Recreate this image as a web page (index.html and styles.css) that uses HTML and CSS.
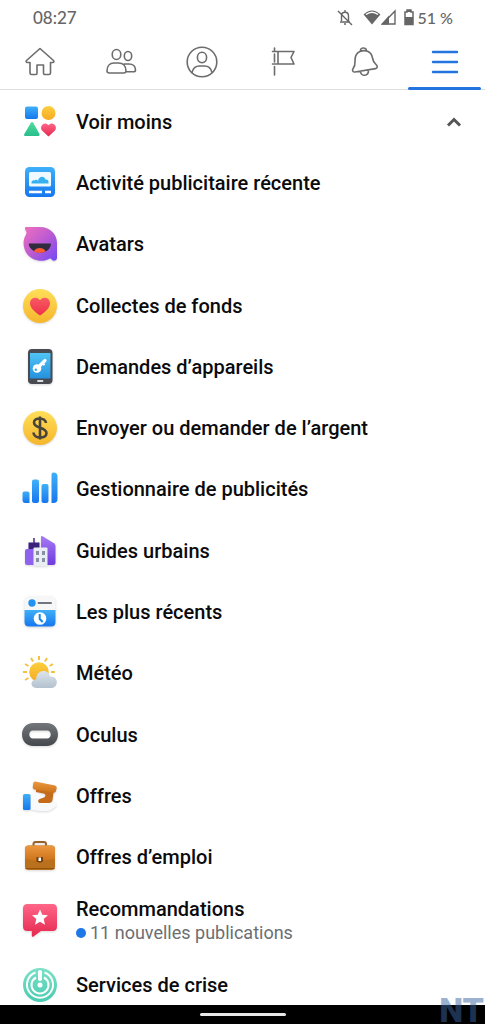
FILE: index.html
```html
<!DOCTYPE html>
<html lang="fr">
<head>
    <meta charset="UTF-8">
    <meta name="viewport" content="width=device-width, initial-scale=1.0">
    <title>Menu</title>
    <link rel="stylesheet" href="styles.css">
</head>
<body>
    <div class="screen">
        <header class="status">
            <span class="time">08:27</span>
            <div class="status-icons">
                <svg class="mute" width="16" height="18" viewBox="0 0 16 18" fill="none" stroke="#666" stroke-width="1.4"><path d="M3 13h10M4.500 12V7c0-5 7-5 7 0v5M8 1v2M7 15h2M1 2l14 14"/></svg>
                <svg class="wifi" width="18" height="18" viewBox="0 0 18 18"><path d="M.6 5.500Q9-2.500 17.400 5.500L9 15.500z" fill="#666"/><path d="M3 5.500Q9 .8 15 5.500" fill="none" stroke="#fff" stroke-width="1.500"/></svg>
                <svg width="15" height="18" viewBox="0 0 15 18"><path d="M1.500 15H14V2z" fill="none" stroke="#666" stroke-width="1.400"/><path d="M0 15.500h8v-9z" fill="#666"/></svg>
                <svg class="battery" width="10" height="18" viewBox="0 0 10 18"><path d="M3 1h4v2h2v12.500H1V3h2z" fill="none" stroke="#666" stroke-width="1.500"/><path d="M1 8h8v7H1zM3 1h4v2H3z" fill="#666"/></svg>
                <span class="percent">51 %</span>
            </div>
        </header>

        <nav class="tabs">
            <a href="#" aria-label="Accueil"><svg viewBox="0 0 32 32"><path d="M16 2.500 2.500 14.500c-.8.800-.3 2 .8 2H6V27c0 1 .5 1.500 1.500 1.500H12c.8 0 1-.5 1-1.200V19h6.500v8.300c0 .7.300 1.200 1 1.200H25c1 0 1.500-.5 1.500-1.500V16.500h2.300c1.100 0 1.500-1.200.7-2z"/></svg></a>
            <a href="#" aria-label="Amis"><svg viewBox="0 0 32 32"><ellipse cx="11.500" cy="8.500" rx="4.300" ry="5"/><ellipse cx="23" cy="10" rx="3.700" ry="4.500"/><path d="M4.500 27C2.800 27 2 26.300 2 25c0-5 3-8 7-8h4.500c4.500 0 7.500 3 7.500 8 0 1.300-.7 2-2.300 2zM19 18h5c4 0 6.500 2.500 6.500 6 0 1.200-.7 1.800-2 1.800H21"/></svg></a>
            <a href="#" aria-label="Profil"><svg viewBox="0 0 32 32"><circle cx="16" cy="16" r="14.800"/><ellipse cx="16" cy="11.500" rx="4.600" ry="5.200"/><path d="M6 26.500c1-4.500 4-6.500 7.500-6.500h5c3.500 0 6.500 2 7.500 6.500"/></svg></a>
            <a href="#" aria-label="Pages"><svg viewBox="0 0 32 32"><path d="M7.500 2v2.500M7.500 8v8M7.500 20.500V29M5.500 5.500H27l-3 6 3 6.500H5.500M11 6v12"/></svg></a>
            <a href="#" aria-label="Notifications"><svg viewBox="0 0 32 32"><path d="M12.500 5.500C11.500 1.500 18 .5 18.500 4.500M12 5.500c6-2.500 11.500.5 12.500 6.500.6 4 1.500 4.500 4 7 1.400 1.600.7 3.300-1 3.600L7 26c-2 .3-3.200-1.500-2-3.200 1.800-2.500 2.200-4 2-7.300-.2-5 1.500-8.500 5-10zM12.500 25.500c.5 5.500 8 5 8-1.300"/></svg></a>
            <a href="#" class="active" aria-label="Menu" aria-current="page"><svg viewBox="0 0 32 32"><path d="M4 6h24M4 16h24M4 26h24"/></svg></a>
        </nav>

        <main class="menu">
            <button class="row" type="button" aria-expanded="true">
                <svg class="icon" viewBox="0 0 36 36">
                    <rect x="3" y="2.500" width="13" height="12.500" rx="2" fill="url(#blue)"/><circle cx="26.500" cy="9" r="7" fill="url(#gold)"/><path d="M9 18.500q1-1 2 0L17.500 30q.7 2-1.200 2H3.500q-2 0-1.200-2z" fill="url(#green)"/><path d="M26.500 32.500 20 26.500c-3-4 2-10 6.500-5.500 4.500-4.500 9.500 1.500 6.500 5.500z" fill="url(#pink)"/>
                </svg>
                <span class="label">Voir moins</span>
                <svg class="chevron" viewBox="0 0 16 12"><path d="M2 9.500 8 3.500l6 6"/></svg>
            </button>
            <a class="row" href="#">
                <svg class="icon" viewBox="0 0 36 36">
                    <rect x="3" y="2" width="30" height="30" rx="4.500" fill="url(#blue)"/><rect x="7" y="7" width="22" height="14.500" rx="1.500" fill="#eefaff"/><path d="M9.500 18.500c-.5-3 2-3.500 3.200-3 .8-1.200 2.500-.8 3.300.5 1-5 6-5.500 7.500-1.500 2-.5 3.500 1 3 4z" fill="#35b0f0"/><path d="M7 27h13M23 27h6" stroke="#fff" stroke-width="2.500"/>
                </svg>
                <span class="label">Activité publicitaire récente</span>
            </a>
            <a class="row" href="#">
                <svg class="icon shadow" viewBox="0 0 36 36">
                    <path d="M4 1h14c10 0 17 7 17 16v15c0 2-2 3-4 2.500-1.800-.4-1.500-2.500-3-2-8 4.500-18 2-23-4.500C1 22 .5 15 3.500 9.500 6 5 3 5 3 2.500 3 1.500 3.200 1 4 1z" fill="url(#violet)"/><path d="M7.500 17.500h20.800c1 0 .7 1 .5 1.800-2.500 10-18.500 9.500-21.800.2-.3-1-.5-2 .5-2z" fill="#302b3d"/><path d="M12 25.300c2-4.300 9.500-4.300 11.500 0-3.500 2.200-8 2.200-11.500 0z" fill="#ff5a35"/>
                </svg>
                <span class="label">Avatars</span>
            </a>
            <a class="row" href="#">
                <svg class="icon shadow" viewBox="0 0 36 36">
                    <circle cx="18" cy="18" r="17" fill="url(#coin)"/><path d="M18 27.500c-4-2.700-10-7-10-12.300 0-5.500 6.500-7.700 10-3 3.500-4.700 10-2.500 10 3 0 5.300-6 9.600-10 12.300z" fill="url(#red)"/>
                </svg>
                <span class="label">Collectes de fonds</span>
            </a>
            <a class="row" href="#">
                <svg class="icon shadow" viewBox="0 0 36 36">
                    <rect x="6" width="24.500" height="35" rx="4" fill="#484b52"/><rect x="8" y="4" width="20.500" height="25.500" fill="url(#screen)"/><circle cx="15" cy="19.500" r="4.300" fill="#fff"/><path d="m16 18.500 7-7" stroke="#fff" stroke-width="3.200" stroke-linecap="round"/><path d="m20.500 14 2 2.200" stroke="#fff" stroke-width="2"/><circle cx="13.800" cy="20.700" r="1.200" fill="#35a8e8"/><path d="M16 32h4.500" stroke="#ddd" stroke-width="1.800" stroke-linecap="round"/>
                </svg>
                <span class="label">Demandes d’appareils</span>
            </a>
            <a class="row" href="#">
                <svg class="icon shadow" viewBox="0 0 36 36">
                    <circle cx="18" cy="18" r="17" fill="url(#coin)"/><path d="M18 6.500v23M24 13c-.5-6-12-6-12-.5 0 6.500 12.500 4 12.500 10.800 0 6-13 5.500-13-.8" fill="none" stroke="#48443b" stroke-width="2.600"/>
                </svg>
                <span class="label">Envoyer ou demander de l’argent</span>
            </a>
            <a class="row" href="#">
                <svg class="icon" viewBox="0 0 36 36" fill="url(#blue)">
                    <path d="M2 20.500h3.500q2 0 2 2V32H3q-2.500 0-2.500-3v-6.500q0-2 1.500-2z"/><rect x="10" y="8.500" width="7" height="23.500" rx="2"/><rect x="19.500" y="13" width="7" height="19" rx="2"/><path d="M29.500 3.500q0-2 2-2 4 0 4 4V28q0 4-4 4h-2z"/>
                </svg>
                <span class="label">Gestionnaire de publicités</span>
            </a>
            <a class="row" href="#">
                <svg class="icon shadow" viewBox="0 0 36 36">
                    <path d="M6.500 17V9.500h4.800V5h1.400v4.500h4.800V17z" fill="#3b217c"/><rect x="3" y="16" width="12" height="16" rx="2" fill="#9061ee"/><path d="M19 4c0-1 .7-1.200 1.500-.8L32 10.300q1.500 1 1.500 2.700v16.500q0 2.500-2.500 2.500H19z" fill="url(#purple)"/><rect x="11.500" y="14.500" width="14" height="18.500" rx="1" fill="#e9edf4"/><path d="M14 18h3v4h-3zm6 0h3v4h-3zm-6 7h3v4h-3zm6 0h3v4h-3z" fill="#8990a3"/>
                </svg>
                <span class="label">Guides urbains</span>
            </a>
            <a class="row" href="#">
                <svg class="icon shadow" viewBox="0 0 36 36">
                    <rect x="2.500" y="2" width="31" height="30.500" rx="5" fill="#f7f7f8"/><path d="M2.500 16h31v12q0 4.500-4.500 4.500H7q-4.500 0-4.500-4.500z" fill="url(#blue)"/><circle cx="10" cy="9" r="3.700" fill="#2393f2"/><path d="M16.500 9h12.500" stroke="#707780" stroke-width="2" stroke-linecap="round"/><circle cx="18" cy="24.500" r="6.300" fill="#fff"/><path d="M17.700 20v5l3 3" fill="none" stroke="#1688ed" stroke-width="2"/>
                </svg>
                <span class="label">Les plus récents</span>
            </a>
            <a class="row" href="#">
                <svg class="icon" viewBox="0 0 36 36">
                    <path d="M17 5V1M11 6.500 9 3M6.500 11 3 9M5 17H1M6.500 23 3 25M23 6.500 25 3M27.500 11l3.500-2M29 17h4" stroke="#f5c142" stroke-width="2"/><circle cx="17" cy="17" r="9.800" fill="url(#gold)"/><path d="M15 33c-7 0-7.500-8-.8-8.800C14 14.500 26 13 28 21.500c9-1 9 11.500 1 11.500z" fill="url(#cloud)"/>
                </svg>
                <span class="label">Météo</span>
            </a>
            <a class="row" href="#">
                <svg class="icon shadow" viewBox="0 0 36 36">
                    <path fill-rule="evenodd" d="M11.500 6h13c15.300 0 15.300 23 0 23h-13C-3.800 29-3.800 6 11.500 6zm-.5 7.500c-5 0-5 8 0 8h14c5 0 5-8 0-8z" fill="url(#gray)"/>
                </svg>
                <span class="label">Oculus</span>
            </a>
            <a class="row" href="#">
                <svg class="icon shadow" viewBox="0 0 36 36">
                    <path d="M9 18q3-4 7-3l16 9c3 .5 3 4 .5 5.500l-5 3q-8 1.500-18.500-1z" fill="#f8fafc"/><path d="M14 11h18l-1.500 11q-.3 3-3.500 3H17q-2.500-3.500 2-4.500l3-1c2-1 2-3.500-.5-4L14 14z" fill="#c56b1c"/><path d="m13 3.500 20 4q2 .5 1.700 2.500l-.7 3q-.5 2-2.500 1.700L12.500 11.500q-2-.3-1.800-2l.5-4q.2-2 1.800-2z" fill="url(#brown)"/><rect x="1" y="16" width="7.500" height="16" rx="1.500" fill="url(#blue)"/>
                </svg>
                <span class="label">Offres</span>
            </a>
            <a class="row" href="#">
                <svg class="icon shadow" viewBox="0 0 36 36">
                    <path d="M11.500 8V5q0-2 2-2h8.500q2 0 2 2v3" fill="none" stroke="#9a632a" stroke-width="2"/><rect x="3" y="6.500" width="30" height="24.500" rx="3.500" fill="#b9711e"/><path d="M3 10q0-3.500 3.500-3.500h23Q33 6.500 33 10v10q-15 4-30 0z" fill="url(#brown)"/><path d="M3.500 29.500h29" stroke="#94520f"/><path d="M14.500 18h6.500v4.500q-3.200 2-6.500 0z" fill="#71410d"/><path d="M16.500 18.500h2.500v3.500h-2.500z" fill="#fff"/>
                </svg>
                <span class="label">Offres d’emploi</span>
            </a>
            <a class="row" href="#">
                <svg class="icon shadow" viewBox="0 0 36 36">
                    <path d="M5.500 1h25Q35 1 35 5.500v18q0 4.500-4.500 4.500H19l-7.500 5.500q-1.700 1-1.700-1V28H5.500Q1 28 1 23.500v-18Q1 1 5.500 1z" fill="url(#pink)"/><path d="m18 6.500 2.300 5.200 5.700.6-4.300 3.800 1.300 5.600-5-2.900-5 2.900 1.300-5.600-4.300-3.800 5.700-.6z" fill="#fff"/>
                </svg>
                <span class="label">Recommandations
                    <small>11 nouvelles publications</small>
                </span>
            </a>
            <a class="row" href="#">
                <svg class="icon" viewBox="0 0 36 36" fill="none" stroke="#fff">
                    <circle cx="18" cy="18" r="17" fill="url(#mint)" stroke="none"/><path d="M13.500 5.500a13 13 0 1 0 9 0M14 10.500a8.500 8.500 0 1 0 8 0" stroke-width="2"/><path d="M18 5v7" stroke-width="4" stroke-linecap="round"/><circle cx="18" cy="18" r="2.500" fill="#fff" stroke="none"/>
                </svg>
                <span class="label">Services de crise</span>
            </a>
        </main>

        <footer class="home-bar">
            <span class="handle"></span>
            <span class="watermark">NT</span>
        </footer>
    </div>

    <!-- gradients shared by the menu icons -->
    <svg class="defs" width="0" height="0" aria-hidden="true">
        <defs>
            <linearGradient id="blue" x2="0" y2="1"><stop stop-color="#3fb0f8"/><stop offset="1" stop-color="#1677ee"/></linearGradient>
            <linearGradient id="gold" x2="0" y2="1"><stop stop-color="#fbcf3f"/><stop offset="1" stop-color="#f7aa22"/></linearGradient>
            <linearGradient id="coin" x2="0" y2="1"><stop stop-color="#ffdf59"/><stop offset="1" stop-color="#f5b62c"/></linearGradient>
            <linearGradient id="green" x2="0" y2="1"><stop stop-color="#51dd9c"/><stop offset="1" stop-color="#28bd8b"/></linearGradient>
            <linearGradient id="pink" x2="0" y2="1"><stop stop-color="#ff6688"/><stop offset="1" stop-color="#e5284f"/></linearGradient>
            <linearGradient id="red" x2="0" y2="1"><stop stop-color="#fa5a62"/><stop offset="1" stop-color="#ec314b"/></linearGradient>
            <linearGradient id="violet" x2="1" y2="1"><stop stop-color="#ef70bd"/><stop offset=".5" stop-color="#bd5bd2"/><stop offset="1" stop-color="#7048f5"/></linearGradient>
            <linearGradient id="purple" x2="0" y2="1"><stop stop-color="#a77bf5"/><stop offset="1" stop-color="#6f3bdc"/></linearGradient>
            <linearGradient id="screen" x2="0" y2="1"><stop stop-color="#50c4f4"/><stop offset="1" stop-color="#2591df"/></linearGradient>
            <linearGradient id="cloud" x2="0" y2="1"><stop stop-color="#dde5ec"/><stop offset="1" stop-color="#b3c2ce"/></linearGradient>
            <linearGradient id="gray" x2="0" y2="1"><stop stop-color="#73767a"/><stop offset="1" stop-color="#45484d"/></linearGradient>
            <linearGradient id="brown" x2="0" y2="1"><stop stop-color="#ec9840"/><stop offset="1" stop-color="#cc721a"/></linearGradient>
            <linearGradient id="mint" x2="0" y2="1"><stop stop-color="#7de0c8"/><stop offset="1" stop-color="#49cbb0"/></linearGradient>
        </defs>
    </svg>
</body>
</html>
```
FILE: styles.css
```css
* {
    box-sizing: border-box;
}
body {
    margin: 0;
    background: #fff;
    color: #0b0b0d;
    font-family: Roboto, "Liberation Sans", sans-serif;
}
a {
    color: inherit;
    text-decoration: none;
}
.screen {
    display: flex;
    flex-direction: column;
    height: 100vh;
}

/* status bar */
.status {
    display: flex;
    justify-content: space-between;
    align-items: center;
    height: 36px;
    padding: 0 32px 0 33px;
    color: #666;
    font: 500 17px/20px Lato, sans-serif;
}
.status-icons {
    display: flex;
    align-items: center;
}
.mute {
    margin-right: 10px;
}
.battery {
    margin: 0 4px 0 8px;
}
.percent {
    font-size: 16px;
}

/* tabs */
.tabs {
    display: grid;
    grid-template-columns: repeat(6, 1fr);
    height: 54px;
    border-bottom: 1px solid #dedede;
}
.tabs a {
    display: flex;
    justify-content: center;
    align-items: center;
    padding-bottom: 2px;
}
.tabs svg {
    width: 32px;
    height: 32px;
    fill: none;
    stroke: #6c6c6c;
    stroke-width: 1.6;
    stroke-linecap: round;
    stroke-linejoin: round;
}
.tabs .active {
    position: relative;
}
.tabs .active::after {
    content: "";
    position: absolute;
    inset: auto 4px -1px;
    height: 3px;
    border-radius: 2px;
    background: #2374df;
}
.tabs .active svg {
    stroke: #2374df;
    stroke-width: 2.4;
}

/* shortcut list */
.menu {
    flex: 1;
    min-height: 0;
    display: grid;
    grid-template-rows: repeat(13, 1fr) 65px 52px;
    padding-top: 1px;
    overflow: hidden;
}
.row {
    display: flex;
    align-items: center;
    gap: 18px;
    width: 100%;
    padding: 0 22px;
    border: 0;
    background: none;
    color: inherit;
    font: 500 20px/24px Roboto, "Liberation Sans", sans-serif;
    text-align: left;
}
.row:last-child {
    height: 64px;
}
.icon {
    flex: none;
    width: 36px;
    height: 36px;
    overflow: visible;
}
.shadow {
    filter: drop-shadow(0 1px 1px rgba(0, 0, 0, 0.15));
}
.label {
    flex: 1;
}
.label small {
    display: flex;
    align-items: center;
    gap: 4px;
    color: #6c6e72;
    font-size: 18px;
    font-weight: 400;
}
.label small::before {
    content: "";
    width: 10px;
    height: 10px;
    border-radius: 50%;
    background: #1f78e8;
}
.chevron {
    width: 16px;
    height: 12px;
    margin-right: 1px;
    fill: none;
    stroke: #555;
    stroke-width: 3;
}

/* gesture bar */
.home-bar {
    position: relative;
    display: flex;
    justify-content: center;
    align-items: center;
    height: 19px;
    background: #000;
}
.handle {
    width: 86px;
    height: 3px;
    border-radius: 2px;
    background: #e8e8e8;
}
.watermark {
    position: absolute;
    right: 1px;
    bottom: 0;
    color: rgba(58, 98, 160, 0.5);
    font: 900 34px/28px Roboto, "Liberation Sans", sans-serif;
}
.defs {
    position: absolute;
}
```
